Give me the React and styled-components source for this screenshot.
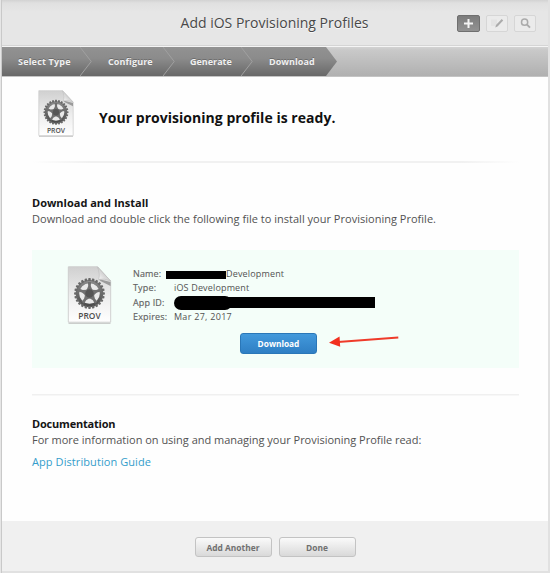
import React from 'react';
import styled, { createGlobalStyle } from 'styled-components';

const GlobalStyle = createGlobalStyle`
  * { box-sizing: border-box; }
  body {
    margin: 0;
    background: #e1e1e1;
    font-family: "Open Sans", "Noto Sans", sans-serif;
    color: #525252;
  }
`;

const Window = styled.div`
  display: flex;
  flex-direction: column;
  width: 550px;
  height: 573px;
  padding: 0 2px 2px;
  background: linear-gradient(90deg, #e6e6e6 0 1px, #c9c9c9 1px 2px, #e1e1e1 2px);
`;

const Header = styled.header`
  display: grid;
  grid-template-columns: 1fr auto 1fr;
  align-items: center;
  flex: none;
  height: 47px;
  padding: 0 12px 0 11px;
  background: linear-gradient(#d2d2d2, #e0e0e0 3px, #e6e6e6 12px, #e6e6e6);
  border-bottom: 1px solid #f5f5f5;
  box-shadow: inset 0 -1px #d5d5d5;
`;

const Title = styled.h1`
  grid-column: 2;
  margin: 0;
  font-size: 14px;
  font-weight: 400;
  line-height: 20px;
  color: #484848;
  text-shadow: 0 1px #f8f8f8;
`;

const Tools = styled.div`
  display: flex;
  justify-content: flex-end;
  gap: 6px;
`;

const ToolButton = styled.button`
  display: flex;
  align-items: center;
  justify-content: center;
  width: ${(p) => (p.$active ? 23 : 22)}px;
  height: 17px;
  padding: 0;
  border: 1px solid ${(p) => (p.$active ? '#6f6f6f' : '#d6d6d6')};
  border-radius: 2px;
  background: ${(p) => (p.$active ? 'linear-gradient(#7c7c7c, #929292)' : '#ebebeb')};
  color: ${(p) => (p.$active ? '#f4f4f4' : '#ababab')};
`;

const Steps = styled.nav`
  flex: none;
  height: 30px;
  background: linear-gradient(#d3d3d3, #c9c9c9 3px, #b0b0b0);
  border-bottom: 1px solid #c4c4c4;
`;

const StepTrack = styled.div`
  display: flex;
  width: 335px;
  height: 29px;
  background: linear-gradient(#929292, #8b8b8b 40%, #686868);
  clip-path: polygon(0 0, 324px 0, 335px 50%, 324px 100%, 0 100%);
`;

const Step = styled.div`
  display: flex;
  align-items: center;
  justify-content: space-between;
  width: ${(p) => p.$width}px;
  padding-left: ${(p) => p.$indent}px;
  font-size: 9px;
  font-weight: 700;
  letter-spacing: ${(p) => p.$tracking || 0}px;
  white-space: nowrap;
  color: #f0f0f0;
  text-shadow: 0 -1px #6c6c6c;
`;

const Body = styled.main`
  flex: none;
  height: 444px;
  padding: 0 29px 0 30px;
  background: #fefefe;
`;

const Hero = styled.section`
  display: flex;
  gap: 25px;
  height: 84px;
  padding: 13px 0 0 6px;
`;

const HeroTitle = styled.h2`
  margin: 18px 0 0;
  font-size: 14px;
  font-weight: 700;
  line-height: 20px;
  letter-spacing: 0.03px;
  color: #111;
`;

const Divider = styled.hr`
  height: 2px;
  margin: 0;
  border: 0;
  background: ${(p) =>
    p.$faded ? 'linear-gradient(90deg, #fefefe, #f1f1f1 12%, #f1f1f1 88%, #fefefe)' : 'linear-gradient(#f0f0f0 50%, #f7f7f7 50%)'};
`;

const Section = styled.section`
  padding-top: ${(p) => p.$top}px;
  font-size: 11px;
  line-height: 16px;
`;

const SectionTitle = styled.h3`
  margin: 0;
  font-size: 11px;
  font-weight: 700;
  letter-spacing: ${(p) => p.$tracking || 0}px;
  color: #151515;
`;

const Paragraph = styled.p`
  margin: 0;
  letter-spacing: ${(p) => p.$tracking || 0}px;
  white-space: nowrap;
`;

const GuideLink = styled.a`
  display: block;
  margin-top: 6px;
  letter-spacing: 0.08px;
  color: #349dcb;
  text-decoration: none;
`;

const ProfileCard = styled.div`
  display: flex;
  gap: 21px;
  height: 118px;
  margin: 23px 0 26px;
  padding: 16px 0 0 35px;
  background: #f4fef9;
`;

const ProfileInfo = styled.div`
  padding-top: 1px;
`;

const Details = styled.dl`
  display: grid;
  grid-template-columns: 41px auto;
  grid-auto-rows: 14.25px;
  margin: 0;
  font-size: 9px;
  line-height: 14px;
  letter-spacing: 0.16px;
`;

const Term = styled.dt`
  color: #626262;
  -webkit-text-stroke: 0.15px #626262;
`;

const Value = styled.dd`
  display: flex;
  align-items: center;
  margin: 0;
  white-space: nowrap;
  letter-spacing: ${(p) => p.$tracking || 0.16}px;
`;

const NameRedaction = styled.span`
  width: 60px;
  height: 8px;
  margin: 2px 0 0 -8px;
  background: #000;
`;

const AppIdRedaction = styled.span`
  display: flex;
  align-items: center;
  width: 201px;
  height: 14px;

  &::before {
    content: '';
    width: 58px;
    height: 14px;
    border-radius: 7px;
    background: #000;
  }

  &::after {
    content: '';
    flex: 1;
    height: 11px;
    margin-left: -8px;
    background: #000;
  }
`;

const Actions = styled.div`
  display: flex;
  align-items: flex-start;
  gap: 12px;
  padding: 9px 0 0 107px;
`;

const DownloadButton = styled.button`
  width: 77px;
  height: 21px;
  padding: 0;
  border: 1px solid #2a77b8;
  border-radius: 3px;
  background: linear-gradient(#4299dc, #2f7fc4);
  font: 700 8.3px/18px "Open Sans", sans-serif;
  color: #fff;
`;

const Footer = styled.footer`
  display: flex;
  justify-content: center;
  gap: 7px;
  flex: none;
  height: 50px;
  padding: 16px 0 0 0;
  background: #f0f0f0;
`;

const FooterButton = styled.button`
  width: 77px;
  height: 20px;
  padding: 0;
  border: 1px solid #c3c3c3;
  border-radius: 3px;
  background: linear-gradient(#fafafa, #d9d9d9);
  font: 700 8.4px/17px "Open Sans", sans-serif;
  color: #707070;
`;

const teeth = Array.from({ length: 24 }, (_, i) => i * 15);
const spokes = [0, 72, 144, 216, 288];

function ProfileIcon({ id, width, height }) {
  return (
    <svg width={width} height={height} viewBox="0 0 44 58">
      <defs>
        <linearGradient id={`${id}-page`} x1="0" y1="0" x2="0" y2="1">
          <stop offset="0" stopColor="#d0d0d0" />
          <stop offset="0.55" stopColor="#eeeeee" />
          <stop offset="1" stopColor="#ffffff" />
        </linearGradient>
        <linearGradient id={`${id}-gear`} gradientUnits="userSpaceOnUse" x1="0" y1="14" x2="0" y2="41">
          <stop offset="0" stopColor="#8d8d8d" />
          <stop offset="1" stopColor="#484848" />
        </linearGradient>
        <linearGradient id={`${id}-fold`} x1="0" y1="1" x2="1" y2="0">
          <stop offset="0" stopColor="#ffffff" />
          <stop offset="1" stopColor="#a2a2a2" />
        </linearGradient>
      </defs>
      <path d="M1 57.2H43" stroke="#b9b9b9" />
      <path d="M.8.8H30L43.2 15V56.2H.8Z" fill={`url(#${id}-page)`} stroke="#cccccc" strokeWidth="0.9" />
      <path d="M31 13L43 16V20L33 15Z" fill="#777777" opacity="0.65" />
      <circle cx="22" cy="27.5" r="11" fill="#e9e9e9" />
      <circle cx="22" cy="27.5" r="12" fill="none" stroke={`url(#${id}-gear)`} strokeWidth="3.4" />
      {teeth.map((a) => (
        <path key={a} d="M21 12.1H23L23.5 15H20.5Z" fill="#696969" transform={`rotate(${a} 22 27.5)`} />
      ))}
      {spokes.map((a) => (
        <path key={a} d="M20.4 16H23.6L23.3 20L25 24.5H19L20.7 20Z" fill="#707070" transform={`rotate(${a} 22 27.5)`} />
      ))}
      <circle cx="22" cy="27.5" r="4.7" fill="#555555" stroke="#777777" strokeWidth="0.8" />
      <path d="M30 .8Q33 9 31 13.4Q37 12 43.2 15Z" fill={`url(#${id}-fold)`} stroke="#bbbbbb" strokeWidth="0.6" />
      <text x="22" y="53" textAnchor="middle" fontFamily="Open Sans, sans-serif" fontSize="8.4" fontWeight="600" fill="#4c4c4c">
        PROV
      </text>
    </svg>
  );
}

const StepChevron = () => (
  <svg width="12" height="29" viewBox="0 0 12 29" fill="none">
    <path d="M0 0L11.2 14.5L0 29" stroke="#a0a0a0" strokeWidth="1" />
  </svg>
);

const PlusIcon = () => (
  <svg width="11" height="11" viewBox="0 0 11 11">
    <path d="M5.5 1V10M1 5.5H10" stroke="currentColor" strokeWidth="2" />
  </svg>
);

const EditIcon = () => (
  <svg width="16" height="13" viewBox="0 0 16 13">
    <path d="M2 2.5H8V9H2Z" fill="#e3e3e3" />
    <path d="M6.3 10.5L7 8L12.7 2L14.2 3.4L8.5 9.5Z" fill="currentColor" />
  </svg>
);

const SearchIcon = () => (
  <svg width="13" height="13" viewBox="0 0 13 13" fill="none" stroke="currentColor">
    <circle cx="5.6" cy="5.2" r="3.1" strokeWidth="1.5" />
    <path d="M8 7.6L11 10.6" strokeWidth="1.9" />
  </svg>
);

const PointerArrow = () => (
  <svg width="70" height="16" viewBox="0 0 70 16">
    <path d="M9 9L69.3 4.4" stroke="#ef3b2a" strokeWidth="2" />
    <path d="M0 9.7L10.5 3.6L11.2 13.8Z" fill="#f2301f" />
  </svg>
);

export default function App() {
  return (
    <>
      <GlobalStyle />
      <Window>
        <Header>
          <Title>Add iOS Provisioning Profiles</Title>
          <Tools>
            <ToolButton $active aria-label="Add"><PlusIcon /></ToolButton>
            <ToolButton aria-label="Edit"><EditIcon /></ToolButton>
            <ToolButton aria-label="Search"><SearchIcon /></ToolButton>
          </Tools>
        </Header>
        <Steps>
          <StepTrack>
            <Step $width={90} $indent={16} $tracking={0.2}>Select Type<StepChevron /></Step>
            <Step $width={83} $indent={16} $tracking={0.1}>Configure<StepChevron /></Step>
            <Step $width={78} $indent={15}>Generate<StepChevron /></Step>
            <Step $width={84} $indent={16} $tracking={0.05}>Download</Step>
          </StepTrack>
        </Steps>
        <Body>
          <Hero>
            <ProfileIcon id="hero" width={36} height={47} />
            <HeroTitle>Your provisioning profile is ready.</HeroTitle>
          </Hero>
          <Divider $faded />
          <Section $top={32}>
            <SectionTitle>Download and Install</SectionTitle>
            <Paragraph $tracking={0.015}>
              Download and double click the following file to install your Provisioning Profile.
            </Paragraph>
            <ProfileCard>
              <ProfileIcon id="card" width={45} height={58} />
              <ProfileInfo>
                <Details>
                  <Term>Name:</Term>
                  <Value><NameRedaction />Development</Value>
                  <Term>Type:</Term>
                  <Value>iOS Development</Value>
                  <Term>App ID:</Term>
                  <Value><AppIdRedaction /></Value>
                  <Term>Expires:</Term>
                  <Value $tracking={0.28}>Mar 27, 2017</Value>
                </Details>
                <Actions>
                  <DownloadButton>Download</DownloadButton>
                  <PointerArrow />
                </Actions>
              </ProfileInfo>
            </ProfileCard>
          </Section>
          <Divider />
          <Section $top={20}>
            <SectionTitle $tracking={-0.2}>Documentation</SectionTitle>
            <Paragraph $tracking={-0.015}>
              For more information on using and managing your Provisioning Profile read:
            </Paragraph>
            <GuideLink>App Distribution Guide</GuideLink>
          </Section>
        </Body>
        <Footer>
          <FooterButton>Add Another</FooterButton>
          <FooterButton>Done</FooterButton>
        </Footer>
      </Window>
    </>
  );
}
